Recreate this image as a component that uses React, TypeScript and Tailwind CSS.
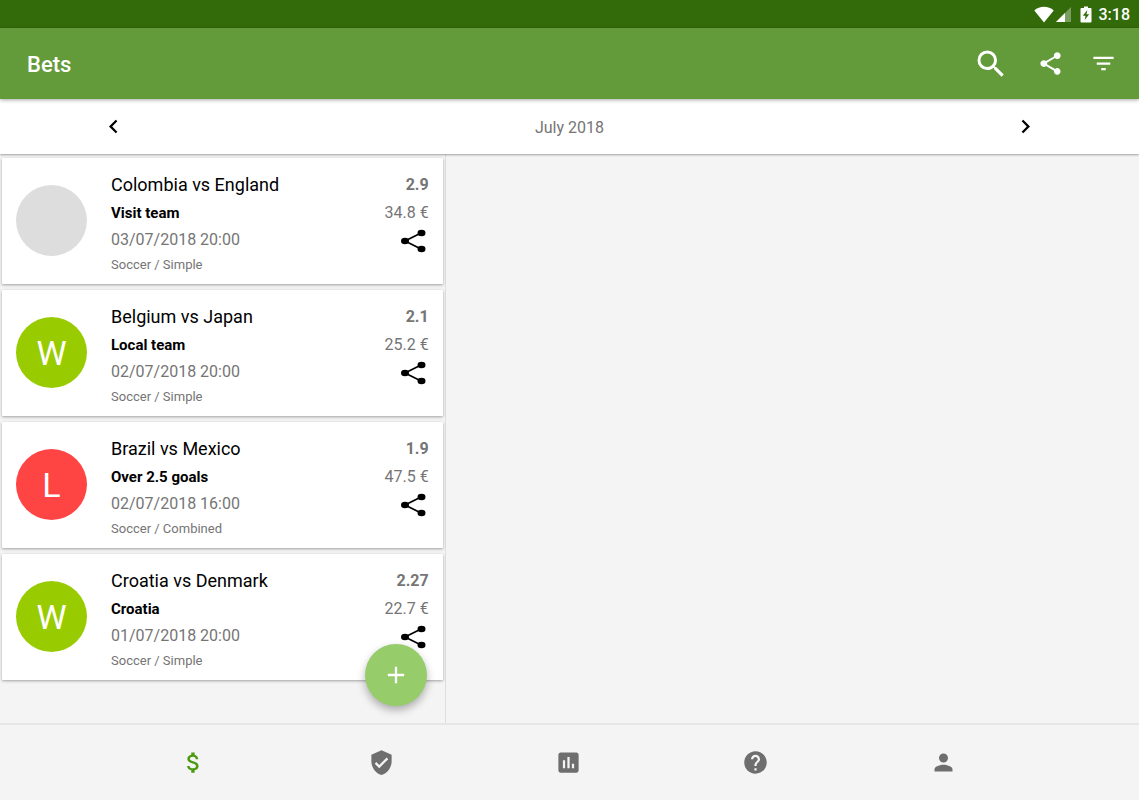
import { useState } from "react";
import {
  MdAdd,
  MdAssessment,
  MdAttachMoney,
  MdChevronLeft,
  MdChevronRight,
  MdFilterList,
  MdHelp,
  MdPerson,
  MdSearch,
  MdShare,
  MdVerifiedUser,
} from "react-icons/md";

type BetResult = "pending" | "won" | "lost";

interface Bet {
  id: number;
  match: string;
  pick: string;
  date: string;
  kind: string;
  odds: string;
  stake: string;
  result: BetResult;
}

const bets: Bet[] = [
  {
    id: 1,
    match: "Colombia vs England",
    pick: "Visit team",
    date: "03/07/2018 20:00",
    kind: "Soccer / Simple",
    odds: "2.9",
    stake: "34.8 €",
    result: "pending",
  },
  {
    id: 2,
    match: "Belgium vs Japan",
    pick: "Local team",
    date: "02/07/2018 20:00",
    kind: "Soccer / Simple",
    odds: "2.1",
    stake: "25.2 €",
    result: "won",
  },
  {
    id: 3,
    match: "Brazil vs Mexico",
    pick: "Over 2.5 goals",
    date: "02/07/2018 16:00",
    kind: "Soccer / Combined",
    odds: "1.9",
    stake: "47.5 €",
    result: "lost",
  },
  {
    id: 4,
    match: "Croatia vs Denmark",
    pick: "Croatia",
    date: "01/07/2018 20:00",
    kind: "Soccer / Simple",
    odds: "2.27",
    stake: "22.7 €",
    result: "won",
  },
];

const badges = {
  pending: { letter: "", color: "bg-[#dddddd]" },
  won: { letter: "W", color: "bg-[#99cc00]" },
  lost: { letter: "L", color: "bg-[#ff4444]" },
};

const tabs = [
  { name: "Bets", Icon: MdAttachMoney },
  { name: "Bookmakers", Icon: MdVerifiedUser },
  { name: "Statistics", Icon: MdAssessment },
  { name: "Help", Icon: MdHelp },
  { name: "Profile", Icon: MdPerson },
];

const StatusBar = () => (
  <div className="flex h-7 items-center justify-end bg-[#336b0a] pr-[9px] text-white">
    <svg width="20" height="17" viewBox="0 0 20 17" fill="currentColor">
      <path d="M10 16.5 0.3 4.4C3 2 6.300 0.800 10 0.800s7 1.200 9.700 3.600z" />
    </svg>
    <svg className="ml-px" width="17" height="17" viewBox="0 0 17 17" fill="currentColor">
      <path d="M16 1v15H1z" opacity="0.35" />
      <path d="M10 7v9H1z" />
    </svg>
    <svg className="ml-2" width="12" height="17" viewBox="0 0 12 17">
      <path
        d="M4 0.500h4V2h2.500q1 0 1 1v12.500q0 1-1 1h-9q-1 0-1-1V3q0-1 1-1H4z"
        fill="currentColor"
      />
      <path d="M7.300 4 2.800 9.700h2.700L4.700 14l4.500-5.700H6.500z" fill="#336b0a" />
    </svg>
    <span className="ml-[7px] pt-px text-base font-medium">3:18</span>
  </div>
);

const CardShareIcon = () => (
  <svg width="26" height="24" viewBox="0 0 26 24">
    <path d="M21 4 5 12l16 8" fill="none" stroke="black" strokeWidth="1.700" />
    <ellipse cx="5" cy="12" rx="4" ry="3.300" />
    <ellipse cx="21.500" cy="4" rx="4" ry="3.300" />
    <ellipse cx="21.500" cy="20" rx="4" ry="3.300" />
  </svg>
);

const BetCard = ({ bet }: { bet: Bet }) => {
  const badge = badges[bet.result];

  return (
    <li className="flex rounded-[1px] bg-white pt-[13px] pr-[14px] pb-[7px] pl-[14px] shadow-[0_1px_3px_rgba(0,0,0,0.35)]">
      <div
        className={`mt-[14px] flex size-[71px] shrink-0 items-center justify-center rounded-full pt-0.5 text-[34px] text-white ${badge.color}`}
      >
        {badge.letter}
      </div>
      <div className="ml-6 min-w-0 flex-1">
        <h2 className="text-lg leading-7 text-black">{bet.match}</h2>
        <p className="text-[15px] leading-7 font-bold text-black">{bet.pick}</p>
        <p className="text-base leading-[26px] text-[#757575]">{bet.date}</p>
        <p className="text-[13px] leading-6 text-[#757575]">{bet.kind}</p>
      </div>
      <div className="flex flex-col items-end text-base leading-7 text-[#757575]">
        <span className="font-bold">{bet.odds}</span>
        <span>{bet.stake}</span>
        <button type="button" aria-label={`Share ${bet.match}`} className="mr-[3px] flex h-7 items-center">
          <CardShareIcon />
        </button>
      </div>
    </li>
  );
};

export default function App() {
  const [tab, setTab] = useState("Bets");

  return (
    <div className="flex min-h-screen flex-col bg-[#f4f4f4] font-['Roboto',sans-serif]">
      <StatusBar />
      <header className="z-20 flex h-[71px] items-center bg-[#639b3a] pr-[22px] pl-[27px] text-white shadow-[0_1px_4px_rgba(0,0,0,0.35)]">
        <h1 className="flex-1 pt-0.5 text-[22px] font-medium">Bets</h1>
        <button type="button" aria-label="Search" className="mr-7">
          <MdSearch size={36} />
        </button>
        <button type="button" aria-label="Share" className="mr-[26px]">
          <MdShare size={27} />
        </button>
        <button type="button" aria-label="Filter">
          <MdFilterList size={27} />
        </button>
      </header>

      <div className="z-10 flex h-[55px] items-center justify-between bg-white px-[100px] shadow-[0_1px_2px_rgba(0,0,0,0.35)]">
        <button type="button" aria-label="Previous month">
          <MdChevronLeft size={27} />
        </button>
        <span className="pt-0.5 text-base text-[#757575]">July 2018</span>
        <button type="button" aria-label="Next month">
          <MdChevronRight size={27} />
        </button>
      </div>

      <main className="grid flex-1 grid-cols-[9fr_14fr]">
        <section className="relative border-r border-[#dedede] pt-1 pr-0.5 pl-0.5">
          <ul className="flex flex-col gap-1.5">
            {bets.map((bet) => (
              <BetCard key={bet.id} bet={bet} />
            ))}
          </ul>
          <button
            type="button"
            aria-label="Add bet"
            className="absolute right-[18px] bottom-[17px] flex size-[62px] items-center justify-center rounded-full bg-[#96cc6a] text-white shadow-[0_4px_8px_rgba(0,0,0,0.3)]"
          >
            <MdAdd size={28} />
          </button>
        </section>
        <section aria-label="Bet details" />
      </main>

      <nav className="flex h-[77px] border-t-2 border-[#e6e6e6] pr-[102px] pl-[100px]">
        {tabs.map(({ name, Icon }) => (
          <button
            key={name}
            type="button"
            aria-label={name}
            onClick={() => setTab(name)}
            className={`flex flex-1 items-center justify-center ${
              tab === name ? "text-[#4a9a10]" : "text-[#6e6e6e]"
            }`}
          >
            <Icon size={27} />
          </button>
        ))}
      </nav>
    </div>
  );
}
